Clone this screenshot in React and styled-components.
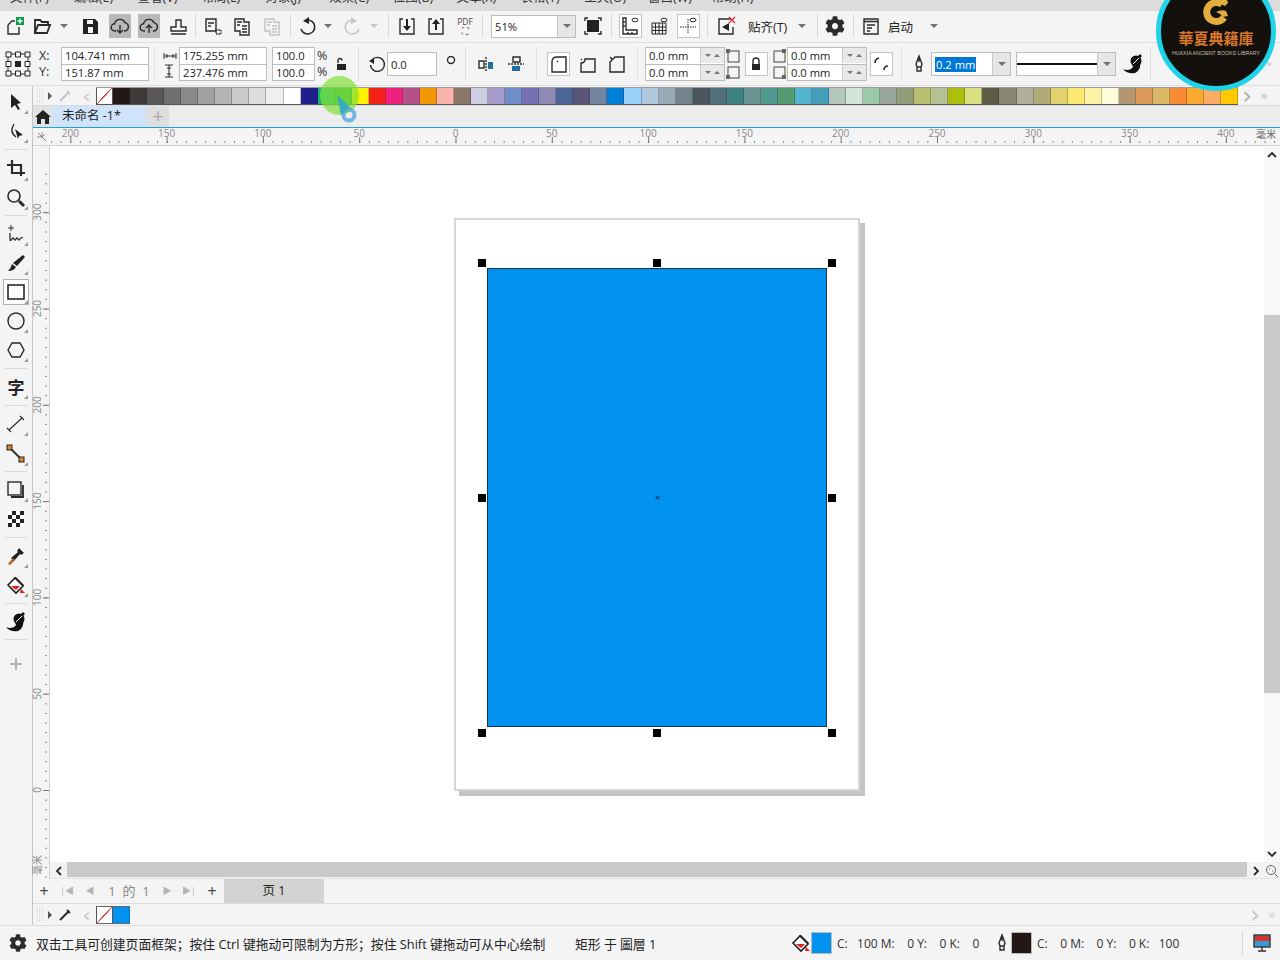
import React from "react";
import styled, { createGlobalStyle } from "styled-components";
import { FaCog } from "react-icons/fa";

const Global = createGlobalStyle`
  html, body { margin: 0; padding: 0; background: #f4f4f4; overflow: hidden; }
  * { box-sizing: border-box; }
  body { font-family: "Open Sans", "Noto Sans CJK SC", sans-serif; color: #222; }
`;

const PALETTE = [
  "#231815", "#3e3a39", "#595757", "#717071", "#898989", "#9fa0a0", "#b5b5b6", "#c9caca", "#dcdddd", "#efefef", "#ffffff",
  "#1d2088", "#14b574", "#22ac38", "#fff100", "#f5221c", "#f0207f", "#b5508a", "#f39800", "#f9b2ac", "#8c7569",
  "#cfcde4", "#a59aca", "#6f8fcc", "#7671b2", "#8f89b5", "#4a6596", "#5a5478", "#71869f", "#0080d8", "#97d1f7",
  "#afc8dc", "#98abb7", "#72838f", "#4d5560", "#51707a", "#3a837f", "#6b9293", "#4f9991", "#559b72", "#52b3d1",
  "#429fbc", "#b4c5bb", "#d2e4d6", "#9cc9a8", "#98a89e", "#939e78", "#bbbf70", "#b6c193", "#afbd0b", "#d9de7e",
  "#5c5c47", "#878673", "#b0b09a", "#b1ab78", "#e2d16e", "#fdeb71", "#fdf3a7", "#fefbd8", "#b4976f", "#d99a5c",
  "#dcb765", "#f88b34", "#fcaa2f", "#fdac64", "#ffc800",
];
const MENUS = ["文件(F)", "编辑(E)", "查看(V)", "布局(L)", "对象(J)", "效果(C)", "位图(B)", "文本(X)", "表格(T)", "工具(O)", "窗口(W)", "帮助(H)"];
const range = (n) => Array.from({ length: n }, (_, i) => i);

const App_ = styled.div`
  position: relative;
  width: 1280px;
  height: 960px;
  display: flex;
  flex-direction: column;
  overflow: hidden;
  background: #f4f4f4;
`;
const MenuBar = styled.div`
  height: 11px;
  flex: none;
  display: flex;
  align-items: flex-end;
  padding: 0 0 4px 10px;
  background: #dcdcdc;
  font-size: 12.5px;
  line-height: 18px;
  color: #333;
`;
const MenuItem = styled.span`
  width: 63.8px;
  flex: none;
`;
const ToolBar = styled.div`
  height: 32px;
  flex: none;
  display: flex;
  align-items: center;
  border-bottom: 1px solid #dedede;
  padding-bottom: 1px;
`;
const Slot = styled.div`
  width: ${(p) => p.$w}px;
  flex: none;
  display: flex;
  justify-content: center;
  align-items: center;
`;
const Face = styled.div`
  width: ${(p) => (p.$box ? 23 : 22)}px;
  height: 24px;
  display: flex;
  justify-content: center;
  align-items: center;
  background: ${(p) => (p.$on ? "#b9b9b9" : p.$box ? "#fff" : "transparent")};
  border: ${(p) => (p.$box ? "1px solid #c4c4c4" : "none")};
  svg { flex: none; }
`;
const Tool = ({ w = 29, on, box, children }) => (
  <Slot $w={w}>
    <Face $on={on} $box={box}>{children}</Face>
  </Slot>
);
const Rule = styled.div`
  width: ${(p) => p.$w || 2}px;
  flex: none;
  height: 24px;
  display: flex;
  justify-content: center;
  &::before { content: ""; width: 1px; background: #d8d8d8; }
`;
const Caret = styled.i`
  display: block;
  width: 0;
  height: 0;
  flex: none;
  border-left: 4px solid transparent;
  border-right: 4px solid transparent;
  border-top: 4px solid ${(p) => p.$c || "#707070"};
`;
const Combo = styled.div`
  width: ${(p) => p.$w}px;
  height: ${(p) => p.$h || 24}px;
  flex: none;
  display: flex;
  background: #fff;
  border: 1px solid #bdbdbd;
  margin-left: ${(p) => p.$ml || 0}px;
  font-size: 11.2px;
  align-items: center;
`;
const ComboText = styled.div`
  flex: 1;
  padding-left: 3px;
  display: flex;
  align-items: center;
`;
const ComboDrop = styled.div`
  width: 18px;
  align-self: stretch;
  flex: none;
  display: flex;
  align-items: center;
  justify-content: center;
  background: #e6e6e6;
  border-left: 1px solid #c8c8c8;
`;
const Label = styled.span`
  font-size: 12.5px;
  flex: none;
  width: ${(p) => p.$w}px;
  padding-left: ${(p) => p.$pl || 0}px;
  white-space: nowrap;
`;
const PdfBadge = styled.div`
  font-size: 8.5px;
  line-height: 9px;
  text-align: center;
  color: #444;
`;

const PropBar = styled.div`
  height: 43px;
  flex: none;
  display: flex;
  align-items: center;
  border-bottom: 1px solid #dedede;
`;
const Group = styled.div`
  width: ${(p) => p.$w}px;
  height: 34px;
  flex: none;
  display: flex;
  align-items: center;
  padding-left: ${(p) => p.$pl || 0}px;
  border-right: 1px solid #dedede;
  &:last-child { border-right: none; }
`;
const Axis = styled.div`
  width: ${(p) => p.$w}px;
  margin-left: ${(p) => p.$ml || 0}px;
  flex: none;
  display: flex;
  flex-direction: column;
  align-items: ${(p) => p.$center ? "center" : "flex-start"};
  font-size: 12.5px;
  line-height: 16px;
  color: #333;
`;
const Fields = styled.div`
  width: ${(p) => p.$w}px;
  margin-left: ${(p) => p.$ml || 0}px;
  flex: none;
  border: 1px solid #bdbdbd;
  background: #fff;
  font-size: 11.2px;
`;
const FieldRow = styled.div`
  height: 16px;
  line-height: 16px;
  padding-left: 3px;
  white-space: nowrap;
  & + & { border-top: 1px solid #bdbdbd; }
`;
const SpinField = styled.div`
  width: 80px;
  flex: none;
  border: 1px solid #bdbdbd;
  background: #fff;
  font-size: 11.2px;
`;
const SpinRow = styled.div`
  height: 16px;
  line-height: 16px;
  padding-left: 3px;
  display: flex;
  justify-content: space-between;
  & + & { border-top: 1px solid #bdbdbd; }
`;
const Spinner = styled.div`
  width: 24px;
  height: 15px;
  background: #e9e9e9;
  border-left: 1px solid #ccc;
  display: flex;
  align-items: center;
  justify-content: space-around;
  padding: 0 2px;
`;
const Up = styled.i`
  width: 0;
  height: 0;
  border-left: 3px solid transparent;
  border-right: 3px solid transparent;
  border-bottom: 3px solid #777;
`;
const Down = styled(Up)`
  border-bottom: none;
  border-top: 3px solid #777;
`;
const Selected = styled.span`
  background: #0078d7;
  color: #fff;
  line-height: 15px;
  padding: 0 1px;
`;
const LinePreview = styled.div`
  flex: 1;
  height: 2px;
  background: #111;
`;

const Body = styled.div`
  flex: 1;
  min-height: 0;
  display: flex;
`;
const ToolBox = styled.div`
  width: 32px;
  flex: none;
  padding-top: 1px;
  display: flex;
  flex-direction: column;
  align-items: center;
`;
const BoxTool = styled.div`
  position: relative;
  width: 24px;
  height: 24px;
  margin: 2.5px 0;
  flex: none;
  display: flex;
  align-items: center;
  justify-content: center;
  background: ${(p) => (p.$on ? "#fff" : "transparent")};
  outline: ${(p) => (p.$on ? "1px solid #b0b0b0" : "none")};
  &::after {
    content: "";
    display: ${(p) => (p.$fly ? "block" : "none")};
    position: absolute;
    right: 0;
    bottom: 0;
    border-left: 4px solid transparent;
    border-bottom: 4px solid #9a9a9a;
  }
`;
const BoxGlyph = styled.span`
  font-family: "Noto Sans CJK SC", sans-serif;
  font-weight: 700;
  font-size: 17px;
  line-height: 20px;
`;
const BoxRule = styled.div`
  width: 22px;
  height: ${(p) => p.$h}px;
  flex: none;
  display: flex;
  align-items: center;
  &::before {
    content: "";
    flex: 1;
    height: 1px;
    background: ${(p) => (p.$blank ? "transparent" : "#d9d9d9")};
  }
`;
const Main = styled.div`
  flex: 1;
  min-width: 0;
  display: flex;
  flex-direction: column;
  border-left: 1px solid #c6c6c6;
`;
const PaletteRow = styled.div`
  height: 20px;
  flex: none;
  display: flex;
  align-items: center;
  border-bottom: 1px solid #dcdcdc;
`;
const Grip = styled.div`
  width: 7px;
  height: 16px;
  margin-left: 3px;
  flex: none;
  background-image: radial-gradient(#b5b5b5 0.6px, transparent 0.7px);
  background-size: 2.5px 2.5px;
`;
const PlayHead = styled.i`
  width: 0;
  height: 0;
  margin-left: 5px;
  flex: none;
  border-top: 4px solid transparent;
  border-bottom: 4px solid transparent;
  border-left: 4px solid #555;
`;
const Chev = styled.span`
  width: ${(p) => p.$w}px;
  flex: none;
  text-align: center;
  font-family: "DejaVu Sans", sans-serif;
  font-size: ${(p) => p.$s || 16}px;
  line-height: 16px;
  color: ${(p) => p.$c || "#aaa"};
`;
const Swatches = styled.div`
  display: flex;
  flex: none;
  height: 18px;
  border-top: 1px solid #9a9a9a;
  border-bottom: 1px solid #555;
`;
const Swatch = styled.div`
  width: 17.05px;
  flex: none;
  background: ${(p) => p.$c};
  border-right: 1px solid rgba(40, 40, 40, 0.28);
`;
const NoColor = styled(Swatch)`
  background: linear-gradient(to bottom right, #fff 47%, #d8413a 48%, #d8413a 52%, #fff 53%);
  border-left: 1px solid #555;
  border-right: 1px solid #555;
`;
const PlainSwatches = styled(Swatches)`
  border-top: 1px solid #666;
  border-bottom: 1px solid #666;
`;
const TabRow = styled.div`
  height: 21px;
  flex: none;
  display: flex;
  background: #ececec;
`;
const HomeTab = styled.div`
  width: 19px;
  flex: none;
  display: flex;
  align-items: center;
  justify-content: center;
  background: #e2e2e2;
`;
const DocTab = styled.div`
  width: 95px;
  flex: none;
  background: #cfe4fb;
  font-size: 12.5px;
  line-height: 20px;
  padding-left: 10px;
`;
const AddTab = styled.div`
  width: 22px;
  flex: none;
  background: #dedede;
  color: #aaa;
  font-size: 20px;
  line-height: 20px;
  text-align: center;
`;
const BlueLine = styled.div`
  height: 1px;
  flex: none;
  background: #1f9fe0;
`;
const RulerRow = styled.div`
  height: 18px;
  flex: none;
  display: flex;
  border-bottom: 1px solid #d2d2d2;
`;
const RulerCorner = styled.div`
  width: 17px;
  flex: none;
  display: flex;
  align-items: center;
  justify-content: center;
`;
const Workspace = styled.div`
  flex: 1;
  min-height: 0;
  display: flex;
`;
const VRulerCol = styled.div`
  width: 18px;
  flex: none;
  margin-left: -1px;
  border-right: 1px solid #d2d2d2;
`;
const CanvasCol = styled.div`
  flex: 1;
  min-width: 0;
  display: flex;
  flex-direction: column;
`;
const CanvasRow = styled.div`
  flex: 1;
  min-height: 0;
  display: flex;
`;
const Canvas = styled.div`
  flex: 1;
  background: #fff;
  padding: 72px 0 0 404px;
`;
const Page = styled.div`
  width: 406px;
  height: 573px;
  background: #fff;
  border: 2px solid #d6d6d6;
  box-shadow: 5px 5px 0 #c4c4c4;
  padding: 48px 0 0 31px;
`;
const Shape = styled.div`
  position: relative;
  width: 340px;
  height: 459px;
  background: #0092ee;
  border: 1px solid #1c3447;
`;
const Handle = styled.i`
  position: absolute;
  width: 8px;
  height: 8px;
  background: #000;
  left: ${(p) => (p.$x === 0 ? "-10px" : p.$x === 1 ? "calc(50% - 4px)" : "auto")};
  right: ${(p) => (p.$x === 2 ? "-10px" : "auto")};
  top: ${(p) => (p.$y === 0 ? "-10px" : p.$y === 1 ? "calc(50% - 4px)" : "auto")};
  bottom: ${(p) => (p.$y === 2 ? "-11px" : "auto")};
`;
const CenterMark = styled.span`
  position: absolute;
  left: calc(50% - 2px);
  top: calc(50% - 7px);
  font-size: 9px;
  line-height: 14px;
  color: #123;
`;
const VScroll = styled.div`
  width: 16px;
  flex: none;
  display: flex;
  flex-direction: column;
  background: #f8f8f8;
`;
const VGap = styled.div`
  flex: ${(p) => p.$grow};
`;
const VThumb = styled.div`
  height: 378px;
  flex: none;
  background: #c9c9c9;
`;
const ArrowCell = styled.div`
  height: 17px;
  width: ${(p) => p.$w || 16}px;
  flex: none;
  display: flex;
  align-items: center;
  justify-content: center;
`;
const HScroll = styled.div`
  height: 17px;
  flex: none;
  display: flex;
  background: #f2f2f2;
  border-bottom: 1px solid #e4e4e4;
`;
const HThumb = styled.div`
  flex: 1;
  height: 15px;
  background: #c9c9c9;
`;
const PageNav = styled.div`
  height: 25px;
  flex: none;
  display: flex;
  align-items: center;
  border-bottom: 1px solid #dcdcdc;
  font-size: 12.5px;
  color: #888;
`;
const NavCell = styled.div`
  width: ${(p) => p.$w}px;
  flex: none;
  text-align: center;
  display: flex;
  justify-content: center;
  white-space: pre;
  color: ${(p) => p.$c || "#b5b5b5"};
  font-size: ${(p) => p.$s || 9}px;
  line-height: 16px;
`;
const PageTab = styled.div`
  width: 100px;
  height: 24px;
  flex: none;
  margin-left: 1px;
  background: #d3d3d3;
  color: #222;
  text-align: center;
  line-height: 23px;
`;
const DocPalette = styled.div`
  height: 21px;
  flex: none;
  display: flex;
  align-items: center;
`;
const Grow = styled.div`
  flex: 1;
`;
const StatusBar = styled.div`
  height: 35px;
  flex: none;
  display: flex;
  align-items: center;
  border-top: 1px solid #dcdcdc;
  font-size: 12.8px;
  white-space: nowrap;
`;
const StatusHint = styled.span`
  width: 539px;
  flex: none;
`;
const StatusObject = styled.span`
  width: 216px;
  flex: none;
`;
const ColorChip = styled.div`
  width: 21px;
  height: 22px;
  flex: none;
  background: ${(p) => p.$c};
  border: 1px solid #bbb;
`;
const ColorText = styled.span`
  width: ${(p) => p.$w}px;
  flex: none;
  white-space: pre;
  padding-left: 5px;
  color: #333;
  font-size: 12px;
`;
const Logo = styled.div`
  position: absolute;
  left: 1156px;
  top: -29px;
  width: 120px;
  height: 120px;
  border-radius: 50%;
  background: #14100e;
  border: 5px solid #1fd3e6;
  display: flex;
  flex-direction: column;
  align-items: center;
  padding-top: 21px;
`;
const LogoCn = styled.div`
  font-family: "Noto Sans CJK TC", sans-serif;
  font-weight: 700;
  font-size: 15px;
  line-height: 18px;
  color: #d9772c;
  white-space: nowrap;
  margin-top: 2px;
`;
const LogoEn = styled.div`
  font-family: "Liberation Sans", sans-serif;
  font-size: 5.3px;
  line-height: 8px;
  margin-top: 2px;
  color: #cbbca6;
  white-space: nowrap;
`;
const CursorHalo = styled.div`
  position: absolute;
  left: 320px;
  top: 76px;
  width: 39px;
  height: 39px;
  border-radius: 50%;
  background: rgba(130, 225, 60, 0.72);
`;
const CursorMark = styled.div`
  position: absolute;
  left: 335px;
  top: 93px;
  display: flex;
`;

const Icon = styled.svg`
  display: block;
  flex: none;
  fill: none;
  stroke: ${(p) => p.$c || "#2a2a2a"};
  stroke-width: ${(p) => p.$sw || 1.4}px;
`;
const I = ({ s = 20, c, sw, children }) => (
  <Icon width={s} height={s} viewBox={`0 0 ${s} ${s}`} $c={c} $sw={sw}>{children}</Icon>
);
const solid = (c = "#222") => ({ fill: c, stroke: "none" });

const CloudIcon = ({ up }) => (
  <I>
    <path d="M6 15H5a3.6 3.6 0 0 1-.4-7.2A5.5 5.5 0 0 1 15 6.6a4.3 4.3 0 0 1 0 8.4h-1" />
    <path d={up ? "M10 17V9M7 12l3-3 3 3" : "M10 9v8M7 14l3 3 3-3"} />
  </I>
);
const DocsIcon = ({ c }) => (
  <I c={c}>
    <path d="M3 3h9v3h5v13H8v-4H3zM5 6h5M5 9h3M10 10h5M10 13h5M10 16h5" />
  </I>
);
const BoxArrow = ({ up }) => (
  <I>
    <path d="M6 3H3v15h14V3h-3" />
    <path {...solid()} d={up ? "M10 3l4 5h-3v6H9V8H6z" : "M9 3h2v7h3l-4 5-4-5h3z"} />
  </I>
);
const Eye = () => <ellipse cx="15" cy="4" rx="3" ry="1.8" strokeWidth="1" />;
const GearIcon = ({ s = 20 }) => <FaCog size={s} color="#2b2b2b" />;
const FillIcon = () => (
  <I>
    <path {...solid("#fff")} stroke="#222" strokeWidth="1.6" d="M2 10l7-7 8 8-7 7z" />
    <path {...solid("#222")} d="M8 2l2 0 8 8-1 1-9-9z" />
    <path {...solid("#d8231f")} d="M5 11h9l-4 4zM15 14l4 4h-5z" />
  </I>
);
const PenIcon = () => (
  <I>
    <path d="M10 2l3 8-1 3H8L7 10zM10 2v6M8 13h4v4H8z" />
  </I>
);
const CurveIcon = () => (
  <I s={24}>
    <path {...solid("#111")} d="M2 17c4 2 8 1 10-2l-1-3 8-2c1 5-1 9-5 11-4 1-9 0-12-4z" />
    <circle {...solid("#111")} cx="15" cy="9" r="5.500" />
    <path {...solid("#111")} d="M19 2l2 2-5 5-2-2z" />
    <path stroke="#fff" strokeWidth="1" d="M12 12l6-6" />
  </I>
);
const CornerIcon = ({ a, b }) => (
  <I s={16} c="#444" sw={1}>
    <rect x="3" y="3" width="11" height="11" />
    <rect {...solid("#666")} x={a} y={b} width="4" height="4" />
  </I>
);

const HRuler = () => {
  const zero = 405.5;
  const step = 96.3;
  return (
    <svg width="1230" height="17">
      {range(140).map((i) => (
        <rect key={i} x={zero + (i - 45) * (step / 10)} y="13" width="1" height="2" fill="#888" />
      ))}
      {range(13).map((i) => {
        const v = (i - 4) * 50;
        const x = zero + (i - 4) * step;
        return (
          <g key={i}>
            <rect x={x} y="9" width="1" height="6" fill="#777" />
            <text x={x} y="9" textAnchor="middle" fontSize="10" fill="#888" fontFamily="Open Sans">{Math.abs(v)}</text>
          </g>
        );
      })}
      <text x="1216" y="10" textAnchor="middle" fontSize="10" fill="#666" fontFamily="Noto Sans CJK SC">毫米</text>
    </svg>
  );
};
const VRuler = () => {
  const zero = 644;
  const step = 96.3;
  return (
    <svg width="17" height="733">
      {range(75).map((i) => (
        <rect key={i} x="13" y={zero - i * (step / 10) + step} width="2" height="1" fill="#888" />
      ))}
      {range(7).map((i) => {
        const y = zero - i * step;
        return (
          <g key={i}>
            <rect x="11" y={y} width="6" height="1" fill="#777" />
            <text transform={`translate(9 ${y}) rotate(-90)`} textAnchor="middle" fontSize="10" fill="#888" fontFamily="Open Sans">{i * 50}</text>
          </g>
        );
      })}
      <text transform="translate(9 719) rotate(-90)" textAnchor="middle" fontSize="10" fill="#888" fontFamily="Noto Sans CJK SC">毫米</text>
    </svg>
  );
};

export default function App() {
  return (
    <App_>
      <Global />
      <MenuBar>
        {MENUS.map((m) => <MenuItem key={m}>{m}</MenuItem>)}
      </MenuBar>

      <ToolBar>
        <Tool w={30}>
          <I>
            <path d="M3 9l4-4h3M3 9v9h11v-7" />
            <rect {...solid("#0a9b4a")} x="11" y="1" width="8" height="8" />
            <path stroke="#fff" d="M15 2.500v5M12.500 5h5" />
          </I>
        </Tool>
        <Tool w={24}>
          <I sw={1.8}>
            <path d="M3 17V4h5l2 2h6v3" />
            <path d="M3 17l3-8h12l-3 8z" />
          </I>
        </Tool>
        <Slot $w={20}><Caret /></Slot>
        <Tool w={31}>
          <I>
            <path {...solid()} d="M3 3h12l3 3v12H3z" />
            <rect {...solid("#f4f4f4")} x="7" y="4" width="6" height="4" />
            <rect {...solid("#f4f4f4")} x="8" y="11" width="5" height="6" />
          </I>
        </Tool>
        <Tool on><CloudIcon /></Tool>
        <Tool on><CloudIcon up /></Tool>
        <Tool>
          <I><path d="M8 11V4h5v7h5v4H3v-4zM3 18h15" /></I>
        </Tool>
        <Rule $w={6} />
        <Tool>
          <I>
            <path d="M3 3h10v12H3zM5 7h6M5 10h3" />
            <rect x="13" y="14" width="5" height="4" strokeDasharray="1.5 1" />
          </I>
        </Tool>
        <Tool w={30}><DocsIcon /></Tool>
        <Tool w={30}><DocsIcon c="#c2c2c2" /></Tool>
        <Rule $w={6} />
        <Tool w={30}>
          <I sw={1.6}>
            <path d="M9 4a7 7 0 1 1-6 9" />
            <path {...solid()} d="M5 5l6-4v7z" />
          </I>
        </Tool>
        <Slot $w={10}><Caret /></Slot>
        <Tool w={38}>
          <I c="#c6c6c6" sw={1.6}>
            <path d="M11 4a7 7 0 1 0 6 9" />
            <path {...solid("#c6c6c6")} d="M15 5L9 1v7z" />
          </I>
        </Tool>
        <Slot $w={6}><Caret $c="#c6c6c6" /></Slot>
        <Rule $w={22} />
        <Slot $w={16}><BoxArrow /></Slot>
        <Slot $w={42}><BoxArrow up /></Slot>
        <Slot $w={16}>
          <PdfBadge>PDF<br />⛶</PdfBadge>
        </Slot>
        <Rule $w={18} />
        <Combo $w={85} $h={23}>
          <ComboText>51%</ComboText>
          <ComboDrop><Caret /></ComboDrop>
        </Combo>
        <Tool w={34}>
          <I>
            <path d="M2 5V2h3M15 2h3v3M18 15v3h-3M5 18H2v-3" />
            <rect {...solid()} x="4" y="4" width="12" height="12" />
          </I>
        </Tool>
        <Rule />
        <Tool w={36} box>
          <I><path d="M3 2h3v12h11v4H3zM3 6h2M3 10h2M8 16v2M12 16v2" /><Eye /></I>
        </Tool>
        <Tool w={22}>
          <I sw={1}><path d="M3 7h14v11H3zM3 11h14M3 14.500h14M6.500 7v11M10 7v11M13.500 7v11" /><Eye /></I>
        </Tool>
        <Tool w={36} box>
          <I sw={1}><path strokeDasharray="1.5 1" d="M2 11h16M10 3v15" /><Eye /></I>
        </Tool>
        <Rule />
        <Tool w={36}>
          <I>
            <path d="M15 3H3v15h14v-7" />
            <path {...solid()} d="M6 11l7-4v8z" />
            <path stroke="#d8342c" d="M13 1l6 6M19 1l-6 6" />
          </I>
        </Tool>
        <Label $w={44} $pl={4}>贴齐(T)</Label>
        <Slot $w={28}><Caret /></Slot>
        <Rule />
        <Tool w={34}><GearIcon /></Tool>
        <Rule />
        <Tool w={34}>
          <I><path d="M3 3h14v15H3zM3 5.500h14M6 9h8M6 12h5M6 15h3" /></I>
        </Tool>
        <Label $w={27}>启动</Label>
        <Slot $w={38}><Caret /></Slot>
      </ToolBar>

      <PropBar>
        <Group $w={155} $pl={5}>
          <Slot $w={26}>
            <I s={26} sw={1}>
              <path d="M3 3h20v20H3z" />
              <path {...solid("#f4f4f4")} stroke="#222" d="M1 1h5v5H1zM10.500 1h5v5h-5zM20 1h5v5h-5zM1 10.500h5v5H1zM20 10.500h5v5h-5zM1 20h5v5H1zM10.500 20h5v5h-5zM20 20h5v5h-5z" />
              <rect {...solid()} x="10" y="10" width="6" height="6" />
            </I>
          </Slot>
          <Axis $w={22} $ml={8}><span>X:</span><span>Y:</span></Axis>
          <Fields $w={88}>
            <FieldRow>104.741 mm</FieldRow>
            <FieldRow>151.87 mm</FieldRow>
          </Fields>
        </Group>
        <Group $w={204} $pl={8}>
          <Axis $w={13} $center>
            <I s={14} sw={1}><path d="M1 4v6M13 4v6M1 7h12M4 5v4M10 5v4" /></I>
            <I s={16} sw={1}><path d="M3 2h8M3 14h8M7 2v12M5 5h4M5 11h4" /></I>
          </Axis>
          <Fields $w={88} $ml={3}>
            <FieldRow>175.255 mm</FieldRow>
            <FieldRow>237.476 mm</FieldRow>
          </Fields>
          <Fields $w={43} $ml={5}>
            <FieldRow>100.0</FieldRow>
            <FieldRow>100.0</FieldRow>
          </Fields>
          <Axis $w={13} $ml={2}><span>%</span><span>%</span></Axis>
          <Slot $w={24}>
            <I s={14}>
              <path d="M3 6V3.500a2 2 0 0 1 4 0" />
              <rect {...solid()} x="2" y="7" width="9" height="6" />
            </I>
          </Slot>
        </Group>
        <Group $w={107} $pl={7}>
          <Slot $w={21}>
            <I><path d="M5 6a7 7 0 1 1-1.500 5" /><path {...solid()} d="M2 7l5-3 0 6z" /></I>
          </Slot>
          <Combo $w={50}><ComboText>0.0</ComboText></Combo>
          <Slot $w={28}>
            <I s={16}><circle cx="8" cy="4" r="3.500" /></I>
          </Slot>
        </Group>
        <Group $w={71} $pl={10}>
          <Slot $w={20}>
            <I>
              <path d="M3 7h5v7H3z" />
              <path {...solid("#1f6e9f")} d="M12 8h5v7h-5z" />
              <path strokeDasharray="2 1" d="M10 3v15" />
            </I>
          </Slot>
          <Slot $w={10} />
          <Slot $w={20}>
            <I>
              <path d="M7 3h7v5H7z" />
              <path {...solid("#1f6e9f")} d="M6 12h8v5H6z" />
              <path strokeDasharray="2 1" d="M2 10h16" />
            </I>
          </Slot>
        </Group>
        <Group $w={101} $pl={10}>
          <Tool w={23} box>
            <I><path d="M3 18V8q0-5 5-5h9v15zM8 7l1 1" /></I>
          </Tool>
          <Slot $w={6} />
          <Slot $w={23}>
            <I><path d="M3 18V9q4 0 4-4h10v13zM3 5l1 1" /></I>
          </Slot>
          <Slot $w={6} />
          <Slot $w={23}>
            <I><path d="M3 18V8l5-5h9v15zM3 3l2 2" /></I>
          </Slot>
        </Group>
        <Group $w={264} $pl={7}>
          <SpinField>
            <SpinRow>0.0 mm<Spinner><Down /><Up /></Spinner></SpinRow>
            <SpinRow>0.0 mm<Spinner><Down /><Up /></Spinner></SpinRow>
          </SpinField>
          <Axis $w={16}>
            <CornerIcon a={1} b={1} />
            <CornerIcon a={1} b={11} />
          </Axis>
          <Slot $w={30}>
            <Face $box>
              <I s={14}>
                <path d="M4 7V4a3 3 0 0 1 6 0v3" />
                <rect {...solid()} x="3" y="7" width="8" height="6" />
              </I>
            </Face>
          </Slot>
          <Axis $w={16}>
            <CornerIcon a={11} b={1} />
            <CornerIcon a={11} b={11} />
          </Axis>
          <SpinField>
            <SpinRow>0.0 mm<Spinner><Down /><Up /></Spinner></SpinRow>
            <SpinRow>0.0 mm<Spinner><Down /><Up /></Spinner></SpinRow>
          </SpinField>
          <Slot $w={29}>
            <Face $box>
              <I sw={1.6}><path d="M3 9q0-4 4-5M9 9h.1M12 16q0-4 4-4M14 16h.1" /></I>
            </Face>
          </Slot>
        </Group>
        <Group $w={249} $pl={7}>
          <Slot $w={20}><PenIcon /></Slot>
          <Combo $w={80} $ml={2}>
            <ComboText><Selected>0.2 mm</Selected></ComboText>
            <ComboDrop><Caret /></ComboDrop>
          </Combo>
          <Combo $w={100} $ml={5}>
            <LinePreview />
            <ComboDrop><Caret /></ComboDrop>
          </Combo>
          <Slot $w={34}><CurveIcon /></Slot>
        </Group>
        <Group $w={125}>
          <Slot $w={112} />
          <Chev $w={12} $s={11} $c="#c0c0c0">»</Chev>
        </Group>
      </PropBar>

      <Body>
        <ToolBox>
          <BoxTool $fly>
            <I><path {...solid()} d="M5 2l10 9-4 1 3 5-2 1-3-5-4 3z" /></I>
          </BoxTool>
          <BoxTool $fly>
            <I>
              <path d="M8 3q-5 8 2 13" />
              <path {...solid()} d="M9 8l8 6-4 1-1 3z" />
            </I>
          </BoxTool>
          <BoxRule $h={9} />
          <BoxTool $fly>
            <I sw={2.2}><path d="M1 6h14v11M6 1v13h13" /></I>
          </BoxTool>
          <BoxTool $fly>
            <I sw={1.6}>
              <circle cx="8" cy="8" r="6" />
              <path strokeWidth="3" d="M13 13l5 5" />
            </I>
          </BoxTool>
          <BoxRule $h={7} />
          <BoxTool $fly>
            <I sw={1}>
              <path d="M5 1v6M2 4h6" />
              <path strokeWidth="1.3" d="M4 9v7q1 1 2-1t2 0 2 0 2 0 2 0 3-1" />
            </I>
          </BoxTool>
          <BoxTool $fly>
            <I>
              <path {...solid()} d="M17 2l2 2-8 9-4-3z" />
              <path {...solid()} d="M6 11l4 3q-2 4-8 4 3-3 4-7z" />
            </I>
          </BoxTool>
          <BoxTool $on $fly>
            <I sw={1.6}><rect x="2" y="3" width="16" height="14" /></I>
          </BoxTool>
          <BoxTool $fly>
            <I sw={1.4}><circle cx="10" cy="10" r="8" /></I>
          </BoxTool>
          <BoxTool $fly>
            <I sw={1.4}><path d="M6 3h8l4 7-4 7H6l-4-7z" /></I>
          </BoxTool>
          <BoxRule $h={8} />
          <BoxTool $fly>
            <BoxGlyph>字</BoxGlyph>
          </BoxTool>
          <BoxRule $h={8} />
          <BoxTool $fly>
            <I sw={1.1}><path d="M3 16L16 4M1 14l4 4M14 2l4 4" /></I>
          </BoxTool>
          <BoxRule $h={1} $blank />
          <BoxTool $fly>
            <I>
              <path strokeWidth="1.8" d="M5 5l10 10" />
              <rect fill="#d9882e" stroke="#222" strokeWidth="1" x="1" y="1" width="5" height="5" />
              <rect fill="#d9882e" stroke="#222" strokeWidth="1" x="13" y="13" width="5" height="5" />
            </I>
          </BoxTool>
          <BoxRule $h={7} />
          <BoxTool $fly>
            <I sw={1.4}>
              <rect x="2" y="2" width="13" height="13" />
              <path strokeWidth="1.8" d="M17 5v12H5" />
            </I>
          </BoxTool>
          <BoxTool>
            <I>
              <rect {...solid()} x="2" y="2" width="16" height="16" />
              {range(16).filter((i) => (i + (i >> 2)) % 2 === 0).map((i) => (
                <rect key={i} {...solid("#fff")} x={2 + (i % 4) * 4} y={2 + (i >> 2) * 4} width="4" height="4" />
              ))}
            </I>
          </BoxTool>
          <BoxRule $h={8} />
          <BoxTool $fly>
            <I>
              <path {...solid()} d="M13 2l5 5-3 2-1-1-6 7-3-3 7-6-1-1z" />
              <path {...solid("#b25a2b")} d="M7 12l2 2-5 5-2-1z" />
            </I>
          </BoxTool>
          <BoxTool $fly><FillIcon /></BoxTool>
          <BoxRule $h={8} />
          <BoxTool><CurveIcon /></BoxTool>
          <BoxRule $h={7} />
          <BoxRule $h={6} $blank />
          <BoxTool>
            <I c="#b5b5b5" sw={2}><path d="M10 4v12M4 10h12" /></I>
          </BoxTool>
        </ToolBox>

        <Main>
          <PaletteRow>
            <Grip />
            <PlayHead />
            <Slot $w={25}>
              <I s={16} c="#c4c4c4" sw={2}><path d="M3 13l8-8M10 3l3 3" /></I>
            </Slot>
            <Chev $w={19} $s={20} $c="#c8c8c8">‹</Chev>
            <Swatches>
              <NoColor />
              {PALETTE.map((c, i) => <Swatch key={i} $c={c} />)}
            </Swatches>
            <Chev $w={18} $s={24} $c="#aaa">›</Chev>
            <Chev $w={16} $s={13} $c="#bbb">»</Chev>
          </PaletteRow>
          <TabRow>
            <HomeTab>
              <I s={18}><path {...solid()} d="M9 2l8 7h-2v7h-4v-5H7v5H3V9H1z" /></I>
            </HomeTab>
            <DocTab>未命名 -1*</DocTab>
            <AddTab>+</AddTab>
          </TabRow>
          <BlueLine />
          <RulerRow>
            <RulerCorner>
              <I s={12} c="#888" sw={1}><path d="M2 2l8 8M6 1v5H1M9 3l-3 3" /></I>
            </RulerCorner>
            <HRuler />
          </RulerRow>
          <Workspace>
            <VRulerCol><VRuler /></VRulerCol>
            <CanvasCol>
              <CanvasRow>
                <Canvas>
                  <Page>
                    <Shape>
                      {[0, 1, 2].flatMap((y) => [0, 1, 2].map((x) => (
                        x === 1 && y === 1 ? null : <Handle key={`${x}${y}`} $x={x} $y={y} />
                      )))}
                      <CenterMark>×</CenterMark>
                    </Shape>
                  </Page>
                </Canvas>
                <VScroll>
                  <ArrowCell>
                    <I s={10} sw={1.8}><path d="M1 7l4-4 4 4" /></I>
                  </ArrowCell>
                  <VGap $grow={160} />
                  <VThumb />
                  <VGap $grow={160} />
                  <ArrowCell>
                    <I s={10} sw={1.8}><path d="M1 3l4 4 4-4" /></I>
                  </ArrowCell>
                </VScroll>
              </CanvasRow>
              <HScroll>
                <ArrowCell $w={17}>
                  <I s={10} sw={1.8}><path d="M7 1L3 5l4 4" /></I>
                </ArrowCell>
                <HThumb />
                <ArrowCell $w={17}>
                  <I s={10} sw={1.8}><path d="M3 1l4 4-4 4" /></I>
                </ArrowCell>
                <ArrowCell>
                  <I s={14} c="#666" sw={1}>
                    <circle cx="6" cy="6" r="4.500" />
                    <path d="M9.500 9.500L13 13M4 5h1M7 7h1" />
                  </I>
                </ArrowCell>
              </HScroll>
            </CanvasCol>
          </Workspace>
          <PageNav>
            <NavCell $w={22} $c="#444" $s={16}>+</NavCell>
            <NavCell $w={24}>|◀</NavCell>
            <NavCell $w={22}>◀</NavCell>
            <NavCell $w={56} $c="#888" $s={13}>{"1  的  1"}</NavCell>
            <NavCell $w={20}>▶</NavCell>
            <NavCell $w={24}>▶|</NavCell>
            <NavCell $w={22} $c="#444" $s={16}>+</NavCell>
            <PageTab>页 1</PageTab>
          </PageNav>
          <DocPalette>
            <Grip />
            <PlayHead />
            <Slot $w={25}>
              <I s={16} sw={2}><path d="M3 13l8-8M10 3l3 3" /></I>
            </Slot>
            <Chev $w={19} $s={20} $c="#c8c8c8">‹</Chev>
            <PlainSwatches>
              <NoColor />
              <Swatch $c="#0092ee" />
            </PlainSwatches>
            <Grow />
            <Chev $w={18} $s={24} $c="#c8c8c8">›</Chev>
            <Chev $w={16} $s={13} $c="#ccc">»</Chev>
          </DocPalette>
        </Main>
      </Body>

      <StatusBar>
        <Slot $w={36}><GearIcon s={18} /></Slot>
        <StatusHint>双击工具可创建页面框架；按住 Ctrl 键拖动可限制为方形；按住 Shift 键拖动可从中心绘制</StatusHint>
        <StatusObject>矩形 于 圖層 1</StatusObject>
        <Slot $w={20}><FillIcon /></Slot>
        <ColorChip $c="#0092ee" />
        <ColorText $w={160}>{"C:   100 M:    0 Y:    0 K:    0"}</ColorText>
        <Slot $w={19}><PenIcon /></Slot>
        <ColorChip $c="#231815" />
        <ColorText $w={209}>{"C:    0 M:    0 Y:    0 K:   100"}</ColorText>
        <Rule />
        <Slot $w={38}>
          <I>
            <rect fill="#3a9bd8" stroke="#333" x="2" y="2" width="16" height="12" />
            <path {...solid("#d8342c")} d="M3 3h14v5H3z" />
            <path d="M10 14v3M6 18h8" />
          </I>
        </Slot>
      </StatusBar>

      <Logo>
        <I s={30} c="#e2ad3c" sw={7}>
          <path d="M21 7.500a9.500 9.500 0 1 0 2 13" />
          <path {...solid("#e2ad3c")} d="M17 1l8-1 2 6-3 3-6-3z" />
          <path {...solid("#e2ad3c")} d="M15 15q5-3 10-1l2 5-5 1q-3-4-7-5z" />
        </I>
        <LogoCn>華夏典籍庫</LogoCn>
        <LogoEn>HUAXIA ANCIENT BOOKS LIBRARY</LogoEn>
      </Logo>
      <CursorHalo />
      <CursorMark>
        <I s={30} c="#4aa3df" sw={4}>
          <circle cx="14" cy="22" r="5.500" opacity="0.75" />
          <path {...solid("#2fa7c9")} opacity="0.9" d="M2 2l13 12-9 8z" />
        </I>
      </CursorMark>
    </App_>
  );
}
